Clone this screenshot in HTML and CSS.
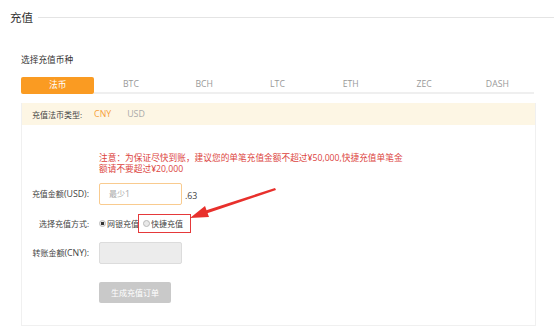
FILE: index.html
```html
<!DOCTYPE html>
<html lang="zh-CN">
<head>
    <meta charset="UTF-8">
    <title>充值</title>
    <link rel="stylesheet" href="styles.css">
</head>
<body>

    <div class="page-title">
        <h2>充值</h2>
        <div class="title-line"></div>
    </div>

    <div class="content">
        <div class="sub-title">选择充值币种</div>

        <!-- currency tabs -->
        <div class="tabs">
            <div class="tab active">法币</div>
            <div class="tab">BTC</div>
            <div class="tab">BCH</div>
            <div class="tab">LTC</div>
            <div class="tab">ETH</div>
            <div class="tab">ZEC</div>
            <div class="tab">DASH</div>
        </div>

        <div class="panel">
            <div class="panel-head">
                <span class="head-label">充值法币类型:</span>
                <span class="coin current">CNY</span>
                <span class="coin">USD</span>
            </div>

            <div class="panel-body">
                <div class="notice">注意：为保证尽快到账，建议您的单笔充值金额不超过¥50,000,快捷充值单笔金<br>额请不要超过¥20,000</div>

                <div class="form-row">
                    <label class="form-label">充值金额<span class="latin">(USD):</span></label>
                    <div class="amount-input">最少<span class="latin">1</span></div>
                    <span class="decimal">.63</span>
                </div>

                <div class="form-row method-row">
                    <label class="form-label">选择充值方式:</label>
                    <span class="radio-option"><i class="radio checked"></i>网银充值</span>
                    <span class="radio-option marked"><i class="radio"></i>快捷充值</span>
                </div>

                <div class="form-row">
                    <label class="form-label">转账金额<span class="latin">(CNY):</span></label>
                    <div class="disabled-input"></div>
                </div>

                <div class="form-row btn-row">
                    <button class="submit-btn">生成充值订单</button>
                </div>
            </div>
        </div>
    </div>

    <!-- annotation arrow -->
    <svg class="arrow" width="554" height="330" viewBox="0 0 554 330">
        <polygon points="275,188 276,190 205,214 204,211" fill="#e8302c"/>
        <polygon points="190,218 205,206 209,217" fill="#e8302c"/>
    </svg>

</body>
</html>
```

FILE: styles.css
```css
body {
    margin: 0;
    padding: 0;
    background-color: #fff;
    font-family: 'Open Sans', 'Noto Sans CJK SC', sans-serif;
    font-size: 8px;
    color: #444;
    position: relative;
}

.latin {
    font-size: 8.8px;
}

.page-title {
    display: flex;
    align-items: center;
    height: 34px;
    padding-left: 10px;
}

.page-title h2 {
    margin: 0;
    font-size: 11.5px;
    font-weight: normal;
    color: #333;
}

.title-line {
    flex: 1;
    height: 1px;
    margin-left: 5px;
    background-color: #e4e4e4;
}

.content {
    padding-left: 21px;
    width: 515px;
}

.sub-title {
    margin-top: 20px;
    line-height: 12px;
    font-size: 8.7px;
    color: #333;
}

.tabs {
    display: flex;
    width: 513px;
    margin-top: 11px;
    font-size: 8.7px;
}

.tab {
    flex: 1;
    height: 15px;
    line-height: 15px;
    text-align: center;
    color: #999;
    border-bottom: 2px solid #efefef;
}

.tab.active {
    height: 17px;
    line-height: 17px;
    border-bottom: none;
    border-radius: 2px;
    background-color: #fa9b22; /* orange */
    color: #fff;
}

.panel {
    margin-top: 9px;
    border: 1px solid #f0f0f0;
    border-top: none;
}

.panel-head {
    display: flex;
    align-items: center;
    height: 22px;
    padding-left: 10px;
    background-color: #fdf6e4;
}

.head-label {
    color: #444;
    margin-right: 12px;
}

.coin {
    font-size: 8.8px;
    color: #aaa;
    margin-right: 16px;
}

.coin.current {
    color: #f7a13b;
}

.panel-body {
    padding: 28px 0 22px 0;
}

.notice {
    margin-left: 77px;
    line-height: 11px;
    font-size: 8.7px;
    color: #dc4440;
}

.form-row {
    display: flex;
    align-items: center;
    margin-top: 8px;
}

.form-label {
    width: 67px;
    margin-right: 10px;
    text-align: right;
    color: #444;
}

.amount-input {
    box-sizing: border-box;
    width: 83px;
    height: 22px;
    line-height: 20px;
    padding-left: 9px;
    border: 1px solid #f9cb8f;
    border-radius: 2px;
    color: #aaa;
}

.decimal {
    margin-left: 3px;
    margin-top: 4px;
    font-size: 8.8px;
    color: #444;
}

.method-row {
    margin-top: 9px;
    height: 19px;
}

.radio-option {
    display: inline-flex;
    align-items: center;
    color: #444;
}

.radio-option.marked {
    box-sizing: border-box;
    height: 19px;
    margin-left: -1px;
    padding: 0 7px 0 4px;
    border: 1.5px solid #e5393a;
}

.radio {
    box-sizing: border-box;
    display: inline-block;
    width: 7px;
    height: 7px;
    margin-right: 1px;
    border-radius: 50%;
    border: 1px solid #b9b9b9;
    background-color: #e9e9e9;
}

.radio.checked {
    background: radial-gradient(circle, #333 1.5px, #e9e9e9 2px);
}

.disabled-input {
    box-sizing: border-box;
    width: 83px;
    height: 22px;
    margin-top: 1px;
    border: 1px solid #dcdcdc;
    border-radius: 2px;
    background-color: #ececec;
}

.btn-row {
    margin-top: 18px;
    padding-left: 77px;
}

.submit-btn {
    width: 72px;
    height: 21px;
    padding: 0;
    border: none;
    border-radius: 2px;
    background-color: #c9c9c9;
    color: #fff;
    font-family: inherit;
    font-size: 8px;
}

.arrow {
    position: absolute;
    left: 0;
    top: 0;
    pointer-events: none;
}
```
